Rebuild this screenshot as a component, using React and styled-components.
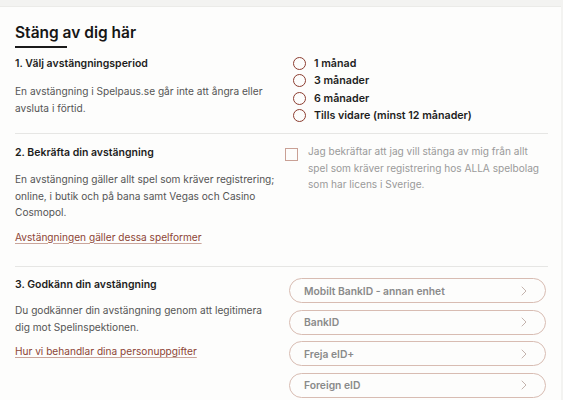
import React from "react";
import styled, { createGlobalStyle } from "styled-components";

const Global = createGlobalStyle`
  html, body { margin: 0; padding: 0; background: #f3f3f1; }
  body { font-family: Inter, "Noto Sans", "Liberation Sans", sans-serif; -webkit-font-smoothing: antialiased; }
`;

const Page = styled.div`
  padding-top: 6px;
  padding-right: 2px;
`;

const Card = styled.div`
  background: #fdfdfc;
  border-top: 1px solid #ebebe8;
  padding: 14px 13px 0 15px;
`;

const Title = styled.h1`
  margin: 0;
  display: inline-block;
  font-size: 15.5px;
  line-height: 24px;
  font-weight: 600;
  color: #161616;
  position: relative;
  padding-bottom: 3px;
  &::after {
    content: "";
    position: absolute;
    left: 0;
    bottom: 0;
    width: 52px;
    height: 2px;
    background: #1b1b1b;
  }
`;

const Section = styled.section`
  display: grid;
  grid-template-columns: 270px 1fr;
  padding: ${(p) => p.$pt}px 0 ${(p) => p.$pb}px;
  border-bottom: ${(p) => (p.$last ? "none" : "1px solid #e6e6e4")};
`;

const Left = styled.div`
  display: flex;
  flex-direction: column;
`;

const Heading = styled.h2`
  margin: 0;
  font-size: 10.5px;
  line-height: 18px;
  font-weight: 600;
  color: #1d1d1d;
`;

const Text = styled.p`
  margin: ${(p) => p.$mt ?? 10}px 0 0;
  font-size: 10.15px;
  line-height: 16.5px;
  color: #555;
  max-width: ${(p) => p.$mw ?? 268}px;
`;

const Link = styled.a`
  margin-top: 8px;
  font-size: 10.15px;
  line-height: 16.5px;
  color: #8d4536;
  text-decoration: underline;
  text-decoration-color: #c9a59b;
  text-underline-offset: 2px;
  align-self: flex-start;
`;

const RadioList = styled.div`
  display: flex;
  flex-direction: column;
  padding-left: 8px;
`;

const RadioRow = styled.label`
  display: flex;
  align-items: center;
  gap: 8px;
  height: 17.3px;
  font-size: 10.7px;
  font-weight: 600;
  color: #1d1d1d;
`;

const RadioCircle = styled.span`
  width: 11px;
  height: 11px;
  border-radius: 50%;
  border: 1.5px solid #8c3d30;
  flex: none;
`;

const CheckRow = styled.label`
  display: flex;
  align-items: flex-start;
  gap: 10px;
  padding-top: 3px;
`;

const CheckBox = styled.span`
  width: 11px;
  height: 11px;
  border: 1.2px solid #c9a095;
  flex: none;
  margin-top: 1px;
`;

const CheckText = styled.span`
  font-size: 10.1px;
  line-height: 16.5px;
  color: #9a9a9a;
  margin-top: -4px;
  max-width: 240px;
`;

const ButtonList = styled.div`
  display: flex;
  flex-direction: column;
  gap: 6.5px;
  padding: 2px 0 0 4px;
`;

const IdButton = styled.button`
  display: flex;
  align-items: center;
  justify-content: space-between;
  height: 25px;
  box-sizing: border-box;
  border: 1.3px solid #d8bcb2;
  border-radius: 13px;
  background: #fdfdfc;
  padding: 0 18px 0 14px;
  font-family: inherit;
  font-size: 10.3px;
  font-weight: 600;
  color: #8a8a8a;
  width: 257px;
`;

const Chevron = () => (
  <svg width="6" height="10" viewBox="0 0 6 10" fill="none">
    <path d="M1 1l4 4-4 4" stroke="#c4b4ae" strokeWidth="1" strokeLinecap="round" strokeLinejoin="round" />
  </svg>
);

const periods = ["1 månad", "3 månader", "6 månader", "Tills vidare (minst 12 månader)"];
const ids = ["Mobilt BankID - annan enhet", "BankID", "Freja eID+", "Foreign eID"];

export default function App() {
  return (
    <Page>
      <Global />
      <Card>
        <Title>Stäng av dig här</Title>
        <Section $pt={7} $pb={9}>
          <Left>
            <Heading>1. Välj avstängningsperiod</Heading>
            <Text $mw={258}>En avstängning i Spelpaus.se går inte att ångra eller avsluta i förtid.</Text>
          </Left>
          <RadioList>
            {periods.map((p) => (
              <RadioRow key={p}>
                <RadioCircle />
                {p}
              </RadioRow>
            ))}
          </RadioList>
        </Section>
        <Section $pt={10} $pb={21}>
          <Left>
            <Heading>2. Bekräfta din avstängning</Heading>
            <Text $mt={9}>
              En avstängning gäller allt spel som kräver registrering; online, i butik och på bana samt Vegas och Casino
              Cosmopol.
            </Text>
            <Link href="#">Avstängningen gäller dessa spelformer</Link>
          </Left>
          <div>
            <CheckRow>
              <CheckBox />
              <CheckText>
                Jag bekräftar att jag vill stänga av mig från allt spel som kräver registrering hos ALLA spelbolag som
                har licens i Sverige.
              </CheckText>
            </CheckRow>
          </div>
        </Section>
        <Section $pt={9} $pb={10} $last>
          <Left>
            <Heading>3. Godkänn din avstängning</Heading>
            <Text $mt={8} $mw={258}>
              Du godkänner din avstängning genom att legitimera dig mot Spelinspektionen.
            </Text>
            <Link href="#">Hur vi behandlar dina personuppgifter</Link>
          </Left>
          <ButtonList>
            {ids.map((t) => (
              <IdButton key={t}>
                {t}
                <Chevron />
              </IdButton>
            ))}
          </ButtonList>
        </Section>
      </Card>
    </Page>
  );
}
